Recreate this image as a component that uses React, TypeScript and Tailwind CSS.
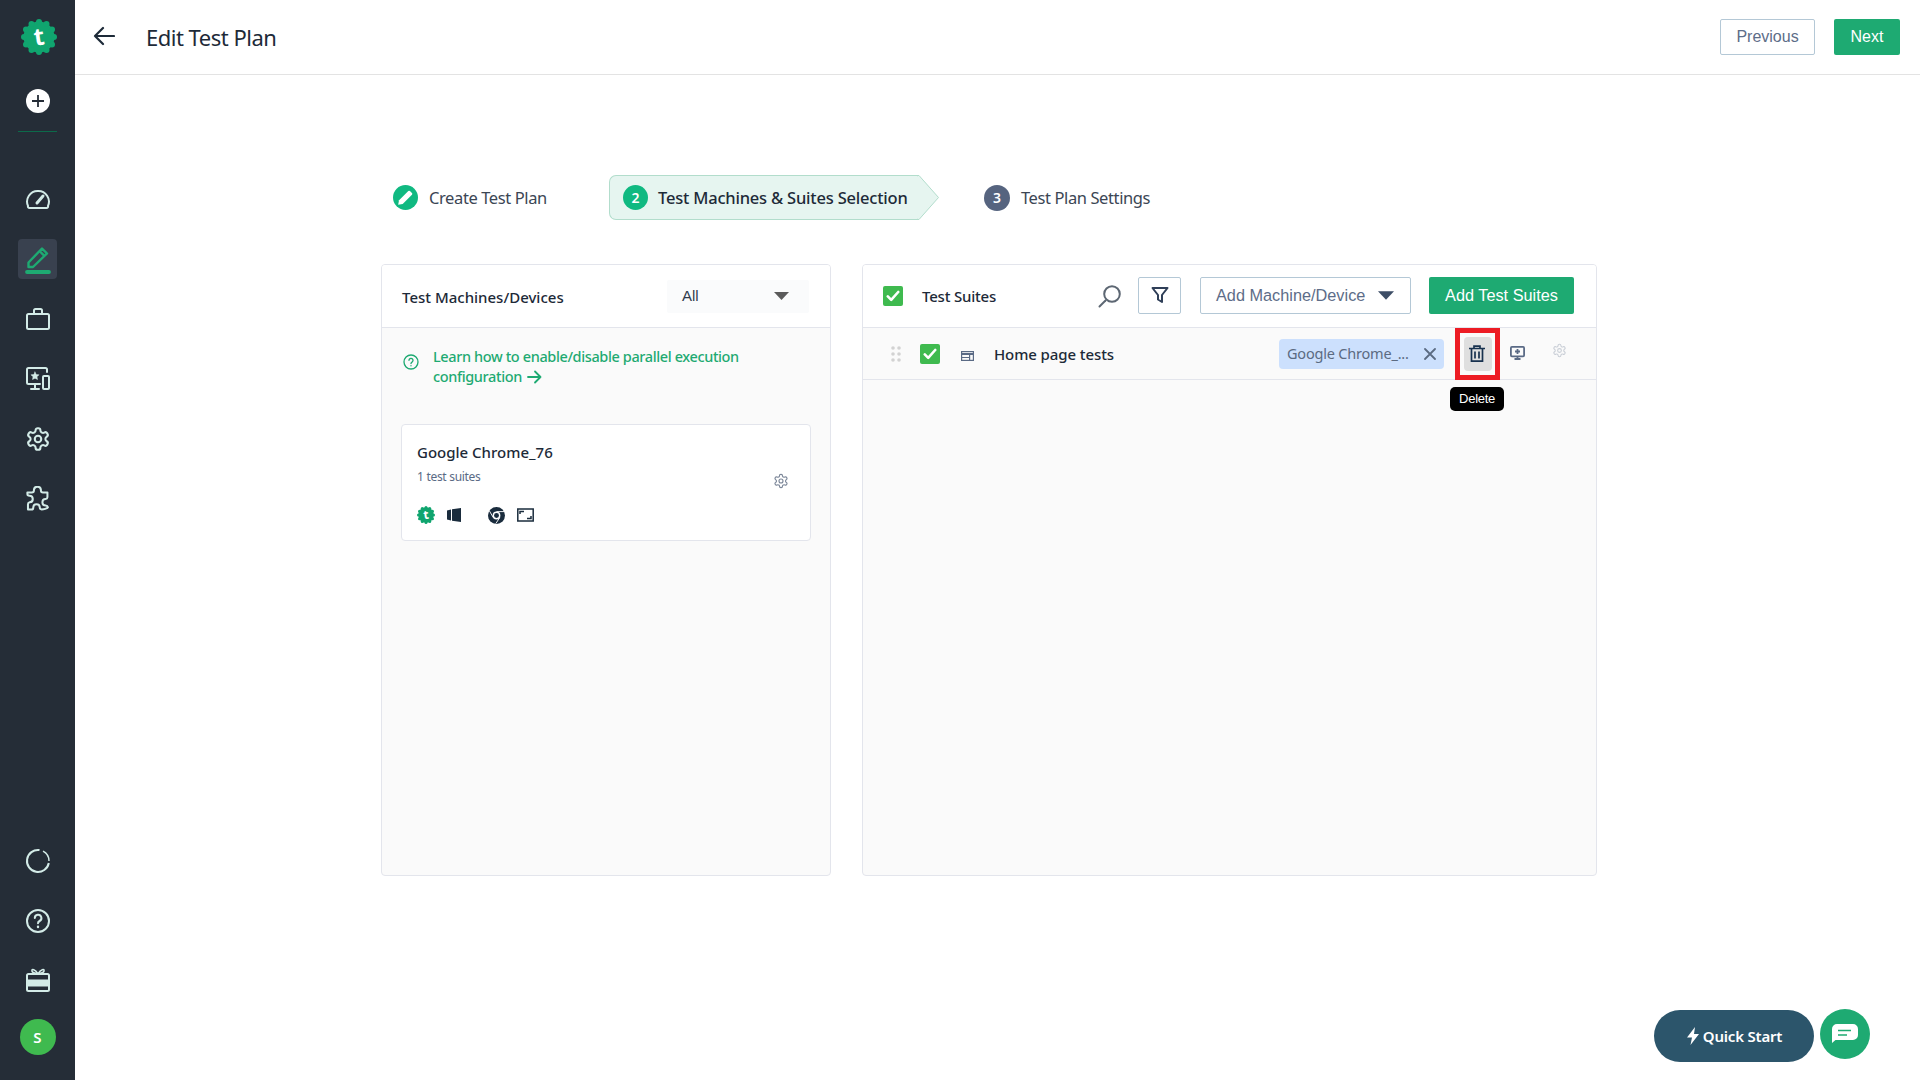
import React from "react";

const GREEN = "#1eaa72";

function Badge({ size, fill = "#10a56f" }: { size: number; fill?: string }) {
  const bumps = Array.from({ length: 12 }, (_, i) => {
    const a = (i / 12) * Math.PI * 2 - Math.PI / 2;
    return { x: 18 + Math.cos(a) * 15, y: 18 + Math.sin(a) * 15 };
  });
  return (
    <svg width={size} height={size} viewBox="0 0 36 36">
      <circle cx="18" cy="18" r="15.5" fill={fill} />
      {bumps.map((b, i) => (
        <circle key={i} cx={b.x} cy={b.y} r="3" fill={fill} />
      ))}
      <text x="18" y="26" textAnchor="middle" fontSize="24" fontWeight="700" fontFamily="'Noto Sans',sans-serif" fill="#fff" transform="rotate(-8 18 18)">t</text>
    </svg>
  );
}

const stroke = "#d3ebe7";
function NavIcon({ children }: { children: React.ReactNode }) {
  return (
    <svg width="26" height="26" viewBox="0 0 26 26" fill="none" stroke={stroke} strokeWidth="2" strokeLinecap="round" strokeLinejoin="round">
      {children}
    </svg>
  );
}

function Check() {
  return (
    <span className="flex h-5 w-5 shrink-0 items-center justify-center rounded-[2px] bg-[#3fba4f]">
      <svg width="14" height="12" viewBox="0 0 14 12" fill="none" stroke="#fff" strokeWidth="2.6" strokeLinecap="round" strokeLinejoin="round">
        <path d="M1.8 6.4 5.2 9.8 12.2 2" />
      </svg>
    </span>
  );
}

const gearPath = "M12.22 2h-.44a2 2 0 0 0-2 2v.18a2 2 0 0 1-1 1.73l-.43.25a2 2 0 0 1-2 0l-.15-.08a2 2 0 0 0-2.73.73l-.22.38a2 2 0 0 0 .73 2.73l.15.1a2 2 0 0 1 1 1.72v.51a2 2 0 0 1-1 1.74l-.15.09a2 2 0 0 0-.73 2.73l.22.38a2 2 0 0 0 2.73.73l.15-.08a2 2 0 0 1 2 0l.43.25a2 2 0 0 1 1 1.73V20a2 2 0 0 0 2 2h.44a2 2 0 0 0 2-2v-.18a2 2 0 0 1 1-1.73l.43-.25a2 2 0 0 1 2 0l.15.08a2 2 0 0 0 2.73-.73l.22-.39a2 2 0 0 0-.73-2.73l-.15-.08a2 2 0 0 1-1-1.74v-.5a2 2 0 0 1 1-1.74l.15-.09a2 2 0 0 0 .73-2.73l-.22-.38a2 2 0 0 0-2.73-.73l-.15.08a2 2 0 0 1-2 0l-.43-.25a2 2 0 0 1-1-1.73V4a2 2 0 0 0-2-2z";

function Gear({ size, color, width = 1.7 }: { size: number; color: string; width?: number }) {
  return (
    <svg width={size} height={size} viewBox="0 0 24 24" fill="none" stroke={color} strokeWidth={width} strokeLinecap="round" strokeLinejoin="round">
      <path d={gearPath} />
      <circle cx="12" cy="12" r="3" />
    </svg>
  );
}

function Sidebar() {
  return (
    <aside className="flex h-full w-[75px] shrink-0 flex-col items-center bg-[#252d37]">
      <div className="mt-[19px] ml-[2px] h-9 w-9"><Badge size={36} /></div>
      <div className="mt-[34px] flex h-6 w-6 items-center justify-center rounded-full bg-white">
        <svg width="14" height="14" viewBox="0 0 14 14" stroke="#252d37" strokeWidth="1.8"><path d="M7 1v12M1 7h12" /></svg>
      </div>
      <div className="mt-[18px] h-px w-[39px] bg-[#0c6a4a]" />
      <div className="mt-[54px] flex h-[26px] items-center">
        <NavIcon>
          <path d="M4.500 22h17a1.600 1.600 0 0 0 1.500-2.100A10.600 10.600 0 0 0 13 5 10.600 10.600 0 0 0 3 19.900 1.600 1.600 0 0 0 4.500 22z" />
          <path d="M12 17 18 10" strokeWidth="3" />
        </NavIcon>
      </div>
      <div className="mt-[27px] flex h-10 w-[39px] flex-col items-center justify-center rounded bg-[#39414f]">
        <svg width="26" height="30" viewBox="0 0 26 30" fill="none" stroke={GREEN} strokeWidth="2.400" strokeLinejoin="round">
          <path d="M3.500 23v-4.500L17 4.500l5 5L8 23z" />
          <path d="M14.500 7l5 5" />
          <path d="M2 28h22" strokeWidth="3.800" strokeLinecap="round" />
        </svg>
      </div>
      <div className="mt-[27px] flex h-[26px] items-center">
        <NavIcon>
          <rect x="2" y="8" width="22" height="15" rx="1.500" />
          <path d="M9 8V4.500A1.500 1.500 0 0 1 10.500 3h5A1.500 1.500 0 0 1 17 4.500V8" />
        </NavIcon>
      </div>
      <div className="mt-[34px] flex h-[26px] items-center">
        <NavIcon>
          <path d="M22 6V3.500A1.500 1.500 0 0 0 20.500 2H3.500A1.500 1.500 0 0 0 2 3.500v13A1.500 1.500 0 0 0 3.500 18H15" />
          <path d="M10 18v5M6 23h8" />
          <rect x="18" y="10" width="6" height="13" rx="1" />
          <path d="m10 6 1.200 2.500 2.800.3-2 2 .5 2.700-2.500-1.300-2.500 1.300.5-2.700-2-2 2.800-.3z" fill={stroke} strokeWidth="0.5" />
        </NavIcon>
      </div>
      <div className="mt-[34px] flex h-[26px] items-center">
        <Gear size={26} color={stroke} width={1.9} />
      </div>
      <div className="mt-[34px] flex h-[26px] items-center">
        <NavIcon>
          <g transform="translate(13 13) scale(1.18) translate(-13 -12.500)" strokeWidth="1.700">
            <path d="M9.500 5.500c0-4.500 6-4.500 6 0 0 1 .8 1.500 1.700 1.500H21v4c-.1 1-.7 1.400-1.500 1.400-3.700 0-3.700 5.600 0 5.600.9 0 1.700.6 1.900 1.500-.5 1.200-3.900 1.800-5.300 1.800-1 0-1.600-.6-1.600-1.500 0-3.700-5.500-3.700-5.500 0 0 1-.6 1.700-1.500 1.700H4.500v-4.500c0-.9.600-1.500 1.500-1.700 3.600-.4 3.300-5.500-.2-5.600-.9 0-1.800-.5-1.800-1.500V7h3.800c1 0 1.700-.5 1.700-1.500z" />
          </g>
        </NavIcon>
      </div>
      <div className="flex-1" />
      <div className="flex h-[26px] items-center">
        <NavIcon>
          <path d="M14.500 2.100A11 11 0 1 0 23.800 15" strokeLinecap="butt" />
          <path d="M24 13A11 11 0 0 0 18 3.200" strokeWidth="1.400" strokeLinecap="butt" />
        </NavIcon>
      </div>
      <div className="mt-[34px] flex h-[26px] items-center">
        <NavIcon>
          <circle cx="13" cy="13" r="11" />
          <path d="M9.800 10a3.300 3.300 0 1 1 4.800 3c-1.100.6-1.600 1.200-1.600 2.300" />
          <path d="M13 18.800v.2" strokeWidth="2.400" />
        </NavIcon>
      </div>
      <div className="mt-[33px] flex h-[26px] items-center">
        <NavIcon>
          <rect x="2" y="7" width="22" height="17" rx="1.500" />
          <path d="M2 13.500h22v5H2z" fill={stroke} />
          <path d="M13 7C10 2 6.500 1.500 7 4c.4 2 3.500 2.500 6 3 2.500-.5 5.600-1 6-3 .5-2.500-3-2-6 3z" strokeWidth="1.600" />
        </NavIcon>
      </div>
      <div className="mt-[26px] mb-[25px] flex h-9 w-9 items-center justify-center rounded-full bg-[#3fba4f] text-[15px] font-semibold text-white">S</div>
    </aside>
  );
}

function Header() {
  return (
    <header className="flex h-[75px] shrink-0 items-center border-b border-[#e3e3e3] bg-white pr-5 pl-[18px]">
      <svg width="22" height="20" viewBox="0 0 22 20" fill="none" stroke="#1d2a38" strokeWidth="2.200" strokeLinecap="round" strokeLinejoin="round" className="-mt-[2px]">
        <path d="M21 10H2M10 2 2 10l8 8" />
      </svg>
      <h1 className="ml-[31px] text-[22px] leading-none font-normal tracking-[-0.5px] text-[#1d2a38]">Edit Test Plan</h1>
      <div className="flex-1" />
      <button className="h-9 w-[95px] rounded-[2px] border border-[#b4c8d6] bg-white font-['Liberation_Sans',sans-serif] text-[16px] text-[#5d6d88]">Previous</button>
      <button className="ml-[19px] h-9 w-[66px] rounded-[2px] bg-[#1eaa72] font-['Liberation_Sans',sans-serif] text-[16px] text-white">Next</button>
    </header>
  );
}

function Stepper() {
  return (
    <div className="mt-[100px] ml-[318px] flex h-[45px] items-center">
      <span className="flex h-[25px] w-[25px] items-center justify-center rounded-full bg-[#10b981]">
        <svg width="17" height="17" viewBox="0 0 15 15" fill="#fff"><path d="M1 14l.8-4L10 1.800a1 1 0 0 1 1.400 0l1.800 1.800a1 1 0 0 1 0 1.400L5 13.200z" /></svg>
      </span>
      <span className="mt-[2px] ml-[11px] w-[118px] text-[16.500px] tracking-[-0.4px] whitespace-nowrap text-[#3b4654]">Create Test Plan</span>
      <div className="relative ml-[62px] flex h-[45px] w-[308px] items-center rounded-l-[7px] border-y border-l border-[#b2ddcc] bg-[#e6f5f0] pl-[13px]">
        <span className="flex h-[25px] w-[25px] items-center justify-center rounded-full bg-[#10b981] text-[14px] font-semibold text-white">2</span>
        <span className="mt-[2px] ml-[10px] text-[16.500px] font-medium tracking-[-0.200px] whitespace-nowrap text-[#1d2a38]">Test Machines &amp; Suites Selection</span>
        <svg className="absolute top-[-1px] left-[307px]" width="23" height="45" viewBox="0 0 23 45">
          <path d="M0 .5h2L21.500 22.500 2 44.500H0z" fill="#e6f5f0" stroke="#b2ddcc" />
          <path d="M0 1.500h1v42H0z" fill="#e6f5f0" />
        </svg>
      </div>
      <span className="ml-[67px] flex h-[26px] w-[26px] items-center justify-center rounded-full bg-[#56647f] text-[14px] font-semibold text-white">3</span>
      <span className="mt-[2px] ml-[11px] text-[16.500px] tracking-[-0.400px] whitespace-nowrap text-[#3b4654]">Test Plan Settings</span>
    </div>
  );
}

function LeftPanel() {
  return (
    <section className="flex h-full w-[450px] flex-col overflow-hidden rounded-[4px] border border-[#e3e5ec] bg-[#fafafa]">
      <div className="flex h-[63px] shrink-0 items-center border-b border-[#e3e5ec] bg-white pr-[21px] pl-5">
        <span className="mt-[3px] text-[15px] font-medium tracking-[0px] text-[#1d2a38]">Test Machines/Devices</span>
        <div className="flex-1" />
        <div className="flex h-[33px] w-[142px] items-center justify-between rounded-[2px] bg-[#fafbfc] pr-5 pl-[15px]">
          <span className="font-['Liberation_Sans',sans-serif] text-[15px] text-[#2f3b4c]">All</span>
          <svg width="15" height="8" viewBox="0 0 15 8" fill="#5b5b5b"><path d="M0 0h15L7.500 8z" /></svg>
        </div>
      </div>
      <div className="flex px-5 pt-[18px]">
        <svg className="mt-[8px] ml-[1px] shrink-0" width="16" height="16" viewBox="0 0 24 24" fill="none" stroke={GREEN} strokeWidth="2" strokeLinecap="round">
          <circle cx="12" cy="12" r="10.500" />
          <path d="M9 9.500a3 3 0 1 1 4.500 2.600c-1 .6-1.500 1.100-1.500 2.200M12 17.500v.2" />
        </svg>
        <p className="ml-[14px] w-[330px] text-[14.500px] leading-[20px] font-medium tracking-[-0.380px] text-[#1eaa72]">
          Learn how to enable/disable parallel execution configuration{" "}
          <svg className="ml-[2px] inline-block align-[-2px]" width="15" height="14" viewBox="0 0 15 14" fill="none" stroke={GREEN} strokeWidth="1.800" strokeLinecap="round" strokeLinejoin="round">
            <path d="M1 7h12.500M8 1.500 13.500 7 8 12.500" />
          </svg>
        </p>
      </div>
      <div className="mx-[19px] mt-[38px] h-[117px] rounded-[4px] border border-[#e3e5ec] bg-white pt-[17px] pl-[15px]">
        <div className="relative">
          <div className="text-[15px] leading-[20px] font-medium tracking-[0px] text-[#1d2a38]">Google Chrome_76</div>
          <div className="mt-[7px] text-[12px] leading-[16px] tracking-[-0.300px] text-[#5a6a85]">1 test suites</div>
          <div className="absolute top-[31px] left-[356px]"><Gear size={16} color="#7a8597" /></div>
          <div className="mt-[21px] flex items-center">
            <Badge size={18} />
            <svg className="ml-[12px]" width="14" height="14" viewBox="0 0 14 14" fill="#1a2c3d"><path d="M0 2.500 4 1.500v11l-4-1zM5 1.300 14 0v14l-9-1.300z" /></svg>
            <svg className="ml-[27px]" width="17" height="17" viewBox="0 0 24 24"><circle cx="12" cy="12" r="12" fill="#1a2c3d" /><circle cx="12" cy="12" r="5.500" fill="#fff" /><circle cx="12" cy="12" r="3.500" fill="#1a2c3d" /><path d="M12 6.500h11M7.500 15 2 5.500M16.500 15 11 23.500" stroke="#fff" strokeWidth="1.300" /></svg>
            <svg className="ml-[12px]" width="17" height="14" viewBox="0 0 17 14" fill="none" stroke="#1a2c3d"><rect x=".8" y="1" width="15.400" height="12" strokeWidth="1.500" /><path d="M3 6V3.500h4M14 8v2.500h-4" strokeWidth="1.500" /></svg>
          </div>
        </div>
      </div>
    </section>
  );
}

function RightPanel() {
  return (
    <section className="ml-[31px] flex h-full w-[735px] flex-col overflow-hidden rounded-[4px] border border-[#e3e5ec] bg-[#fafafa]">
      <div className="flex h-[63px] shrink-0 items-center border-b border-[#e3e5ec] bg-white pl-5">
        <Check />
        <span className="ml-[19px] w-[75px] shrink-0 text-[15px] font-medium tracking-[-0.200px] whitespace-nowrap text-[#1d2a38]">Test Suites</span>
        <svg className="ml-[101px] shrink-0" width="23" height="23" viewBox="0 0 23 23" fill="none" stroke="#5d6773" strokeWidth="2" strokeLinecap="round"><circle cx="14" cy="9" r="7.800" /><path d="M7.500 15.500 1.500 21.500" /></svg>
        <button className="-mt-[2px] ml-[17px] flex h-[37px] w-[43px] shrink-0 items-center justify-center rounded-[2px] border border-[#b4c8d6] bg-white">
          <svg width="18" height="18" viewBox="0 0 18 18" fill="none" stroke="#2f3f58" strokeWidth="2" strokeLinejoin="round"><path d="M1.500 2h15L11 9v7l-4-2.500V9z" /></svg>
        </button>
        <button className="-mt-[2px] ml-[19px] flex h-[37px] w-[211px] shrink-0 items-center justify-between rounded-[2px] border border-[#b4c8d6] bg-white pr-[16px] pl-[15px] font-['Liberation_Sans',sans-serif] text-[16.300px] text-[#5d6d88]">
          Add Machine/Device
          <svg width="16" height="9" viewBox="0 0 15 8" fill="#3d4d66"><path d="M0 0h15L7.500 8z" /></svg>
        </button>
        <button className="-mt-[2px] ml-[18px] h-[37px] w-[145px] shrink-0 rounded-[2px] bg-[#1eaa72] font-['Liberation_Sans',sans-serif] text-[16.300px] text-white">Add Test Suites</button>
      </div>
      <div className="relative flex h-[52px] shrink-0 items-center border-b border-[#e3e5ec]">
        <svg className="ml-[28px]" width="10" height="16" viewBox="0 0 10 16" fill="#d2d2d2">
          <circle cx="2" cy="2" r="1.800" /><circle cx="8" cy="2" r="1.800" /><circle cx="2" cy="8" r="1.800" /><circle cx="8" cy="8" r="1.800" /><circle cx="2" cy="14" r="1.800" /><circle cx="8" cy="14" r="1.800" />
        </svg>
        <span className="ml-[19px]"><Check /></span>
        <svg className="mt-[4px] ml-[21px]" width="13" height="10" viewBox="0 0 13 10" fill="none" stroke="#5a6a85" strokeWidth="1.200"><rect x=".6" y=".6" width="11.800" height="8.800" /><path d="M.6 3h11.800" strokeWidth="2" /><path d="M.6 6.500h8M8.600 3v6.400" /></svg>
        <span className="mt-[1px] ml-[20px] text-[15px] font-medium tracking-[-0.100px] text-[#1d2a38]">Home page tests</span>
        <div className="flex-1" />
        <div className="flex h-[30px] w-[165px] items-center justify-between rounded-[4px] bg-[#cce0fd] pr-[8px] pl-[8px]">
          <span className="text-[14.500px] tracking-[-0.200px] text-[#5b6b82]">Google Chrome_...</span>
          <svg width="12" height="12" viewBox="0 0 12 12" stroke="#5b6b82" strokeWidth="1.800" strokeLinecap="round"><path d="M1 1l10 10M11 1 1 11" /></svg>
        </div>
        <div className="ml-[11px] flex h-[52px] w-[45px] items-center justify-center border-[5px] border-[#ed1c24]">
          <div className="flex h-[34px] w-[28px] items-center justify-center rounded-[4px] bg-[#dfdfdf]">
            <svg className="-ml-[1px]" width="16" height="17" viewBox="0 0 16 17" fill="none" stroke="#18324f" strokeWidth="1.700"><path d="M0 3.500h16M5 3.500V1.200h6v2.300M2.500 3.500v12.700h11V3.500M6 6.500v7M10 6.500v7" /></svg>
          </div>
        </div>
        <svg className="ml-[10px] -mt-[2px]" width="15" height="14" viewBox="0 0 15 14" fill="none" stroke="#5a6a85" strokeWidth="1.800"><rect x=".9" y=".9" width="13.200" height="9.400" rx="1" /><path d="M7.500 3v5M5 5.500h5M7.500 10.200v2.800M4.500 13h6" /></svg>
        <span className="ml-[27px] -mt-[7px]"><Gear size={15} color="#c9ced6" /></span>
        <span className="w-[29px]" />
        <div className="absolute top-[59px] left-[587px] flex h-6 w-[54px] items-center justify-center rounded-[5px] bg-black font-['Liberation_Sans',sans-serif] text-[13px] tracking-[-0.300px] text-white">Delete</div>
      </div>
    </section>
  );
}

export default function App() {
  return (
    <div className="relative flex h-screen w-full overflow-hidden bg-white font-['Noto_Sans',sans-serif]">
      <Sidebar />
      <main className="flex min-w-0 flex-1 flex-col">
        <Header />
        <Stepper />
        <div className="mt-[44px] ml-[306px] flex h-[612px]">
          <LeftPanel />
          <RightPanel />
        </div>
      </main>
      <div className="absolute right-[50px] bottom-[18px] flex items-start">
        <button className="mt-[1px] flex h-[52px] w-[160px] items-center justify-center rounded-full bg-[#2c556b] text-[15px] font-semibold tracking-[-0.200px] text-white">
          <svg className="mr-[3px]" width="14" height="18" viewBox="0 0 14 18" fill="#fff"><path d="M9 0 1 10.500h5L4.500 18 13 7H8z" /></svg>
          Quick Start
        </button>
        <div className="ml-[6px] flex h-[50px] w-[50px] items-center justify-center rounded-full bg-[#1eaa72]">
          <svg width="26" height="20" viewBox="0 0 26 20"><path d="M5 0h16a5 5 0 0 1 5 5v6a5 5 0 0 1-5 5H3.500L0 19V5a5 5 0 0 1 5-5z" fill="#fff" /><path d="M6 6.500h13M6 11h9" stroke="#1eaa72" strokeWidth="1.500" /></svg>
        </div>
      </div>
    </div>
  );
}
